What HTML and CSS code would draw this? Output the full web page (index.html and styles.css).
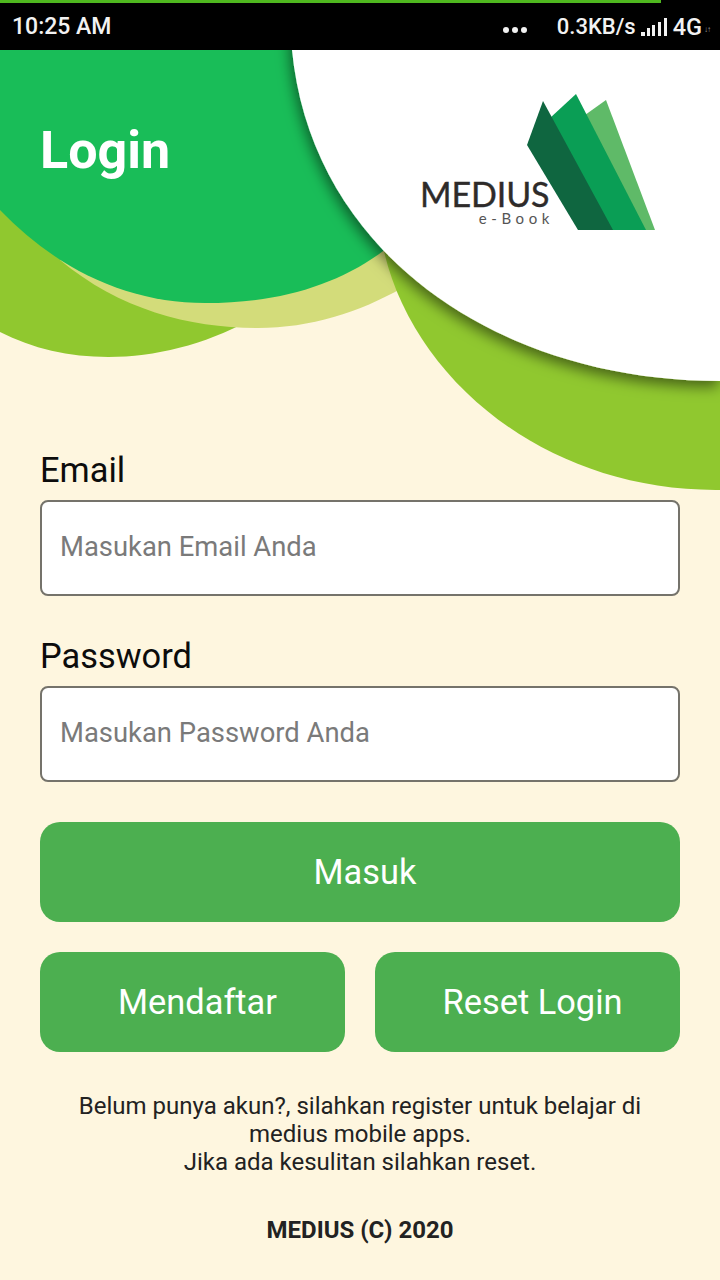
FILE: index.html
```html
<!DOCTYPE html>
<html lang="id">
<head>
<meta charset="utf-8">
<title>Login</title>
<link rel="stylesheet" href="styles.css">
</head>
<body>
<div class="statusbar">
  <div class="progress"></div>
  <span class="time">10:25 AM</span>
  <div class="status-right">
    <span class="dots"><i></i><i></i><i></i></span>
    <span class="speed">0.3KB/s</span>
    <svg class="signal" width="28" height="20" viewBox="0 0 28 20"><path fill="#f2f2f2" d="M0 15h4v4H0zM6 11h3v8H6zM11 8h3v11h-3zM17 5h3v14h-3zM23 1h3v18h-3z"/></svg>
    <span class="net">4G</span>
    <span class="arrows">↓↑</span>
  </div>
</div>
<header class="hero">
  <svg class="hero-bg" width="720" height="450" viewBox="0 0 720 450">
    <defs>
      <filter id="shadow" x="-10%" y="-10%" width="120%" height="130%">
        <feDropShadow dx="-2" dy="6" stdDeviation="7" flood-color="#000" flood-opacity="0.5"/>
      </filter>
    </defs>
    <path class="lime" d="M0 150V282C70 318 165 316 250 270L300 150Z"/>
    <path class="pale" d="M60 210C120 260 190 278 258 278C310 278 360 262 402 238L385 150H60Z"/>
    <path class="lime" d="M380 180C400 320 540 442 720 440V180Z"/>
    <path class="green" d="M0 0V160C60 222 130 253 205 253C280 253 340 235 390 196L420 0Z"/>
    <path class="white" filter="url(#shadow)" d="M292 0C312 205 500 331 720 331V-20H292Z"/>
    <polygon fill="#5fba68" points="606,50 655,180 630,180 585,65"/>
    <polygon fill="#0a9e55" points="576,44 646,180 600,180 550,68"/>
    <polygon fill="#0f6640" points="543,51 613,180 578,180 527,95"/>
  </svg>
  <h1 class="title">Login</h1>
  <div class="brand">
    <span class="brand-name">MEDIUS</span>
    <span class="brand-sub">e-Book</span>
  </div>
</header>
<main class="form">
  <label class="label">Email</label>
  <div class="input">Masukan Email Anda</div>
  <label class="label label-second">Password</label>
  <div class="input">Masukan Password Anda</div>
  <button class="btn btn-wide">Masuk</button>
  <div class="btn-row">
    <button class="btn">Mendaftar</button>
    <button class="btn">Reset Login</button>
  </div>
  <p class="note">Belum punya akun?, silahkan register untuk belajar di<br>medius mobile apps.<br>Jika ada kesulitan silahkan reset.</p>
  <p class="copy">MEDIUS (C) 2020</p>
</main>
</body>
</html>
```
FILE: styles.css
```css
* { box-sizing: border-box; }
html, body { margin: 0; padding: 0; }
body { width: 720px; height: 1280px; overflow: hidden; background: #fef6df; font-family: Roboto, "Liberation Sans", sans-serif; color: #111; }

.statusbar { position: relative; height: 50px; background: #000; color: #f2f2f2; display: flex; align-items: center; justify-content: space-between; padding: 3px 10px 0 12px; font-weight: 500; }
.progress { position: absolute; left: 0; top: 0; width: 661px; height: 3px; background: #4fb81f; }
.time { font-size: 23px; }
.status-right { display: flex; align-items: center; }
.dots { display: flex; gap: 3px; margin-right: 30px; padding-top: 6px; }
.dots i { width: 6px; height: 6px; border-radius: 50%; background: #f2f2f2; }
.speed { font-size: 22px; margin-right: 5px; }
.signal { margin-right: 4px; }
.net { font-size: 23.5px; }
.arrows { font-size: 8px; color: #999; margin-left: 2px; padding-top: 6px; letter-spacing: -1px; }

.hero { position: relative; height: 400px; }
.hero-bg { display: block; position: absolute; left: 0; top: 0; }
.lime { fill: #90c82f; }
.pale { fill: #d3dc7a; }
.green { fill: #19bd58; }
.white { fill: #fff; }
.title { position: absolute; left: 40px; top: 68px; margin: 0; font-size: 52px; line-height: 66px; font-weight: 700; color: #fff; }
.brand { position: absolute; left: 420px; top: 129px; width: 132px; font-family: Lato, "Open Sans", sans-serif; color: #2e2b2a; }
.brand-name { display: block; font-size: 34px; line-height: 30px; -webkit-text-stroke: 0.4px #2e2b2a; letter-spacing: -0.1px; }
.brand-sub { display: block; text-align: right; font-size: 15px; line-height: 14px; letter-spacing: 4.6px; margin: 2px -2px 0 0; color: #555; }

.form { padding: 0 40px; }
.label { display: block; font-size: 34.4px; line-height: 40px; height: 50px; color: #0c0c0c; }
.label-second { margin-top: 40px; }
.input { height: 96px; background: #fff; border: 2px solid #75736b; border-radius: 8px; padding: 0 0 2px 18px; display: flex; align-items: center; font-size: 27.4px; color: #7a7a7a; }
.btn { height: 100px; border: 0; border-radius: 20px; background: #4caf50; color: #fff; font-family: inherit; font-size: 34.4px; display: block; padding: 0 0 0 10px; }
.btn-wide { width: 100%; margin-top: 40px; }
.btn-row { display: grid; grid-template-columns: 305px 305px; gap: 30px; margin-top: 30px; }
.note { margin: 40px 0 0; text-align: center; font-size: 24px; line-height: 28px; color: #222; }
.copy { margin: 38px 0 0; text-align: center; font-size: 24px; line-height: 32px; font-weight: 700; color: #222; }
```
